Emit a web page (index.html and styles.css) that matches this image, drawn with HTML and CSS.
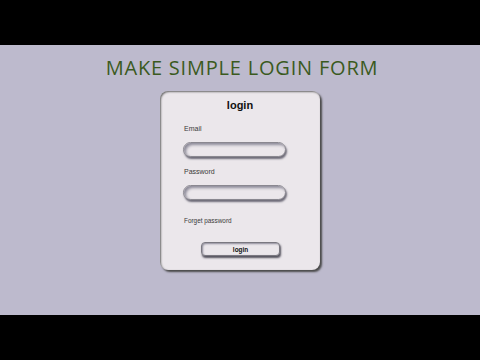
FILE: index.html
```html
<!DOCTYPE html>
<html>
<head>
<meta charset="utf-8">
<title>Make simple login form</title>
<link rel="stylesheet" href="styles.css">
</head>
<body>
<div class="bar"></div>
<main class="stage">
  <h1 class="title">MAKE SIMPLE LOGIN FORM</h1>
  <form class="card">
    <h2 class="card-title">login</h2>
    <label class="label label-email">Email</label>
    <input class="field" type="text">
    <label class="label label-pass">Password</label>
    <input class="field" type="password">
    <a class="forgot">Forget password</a>
    <button class="btn" type="button">login</button>
  </form>
</main>
<div class="bar"></div>
</body>
</html>
```
FILE: styles.css
```css
html, body {
  margin: 0;
  padding: 0;
  background: #000;
}
.bar {
  height: 45px;
  background: #000;
}
.stage {
  height: 270px;
  background: #bdbacd;
  display: flex;
  flex-direction: column;
  align-items: center;
}
.title {
  margin: 10px 0 0 4px;
  font-family: "Open Sans", sans-serif;
  font-weight: 400;
  font-size: 20px;
  line-height: 26px;
  letter-spacing: 0.8px;
  color: #3b5a1e;
}
.card {
  margin-top: 10px;
  width: 160px;
  height: 179px;
  box-sizing: border-box;
  padding: 8px 0 0 23px;
  background: #ebe7eb;
  border-radius: 8px;
  box-shadow: 2px 2px 2px #4a4a4a, inset 1px 1px 2px #6a6a6a;
  display: flex;
  flex-direction: column;
  font-family: "Liberation Sans", Arial, sans-serif;
  color: #222;
}
.card-title {
  margin: 0 0 0 -23px;
  text-align: center;
  font-size: 11px;
  line-height: 13px;
  font-weight: 700;
  color: #111;
}
.label {
  display: block;
  margin: 13px 0 0 1px;
  font-size: 7px;
  line-height: 8px;
  color: #3a3a3a;
}
.label-pass {
  margin-top: 11px;
}
.field {
  display: block;
  box-sizing: border-box;
  margin: 9px 0 0 0;
  width: 103px;
  height: 15px;
  padding: 0 8px;
  border: 1px solid #8a8890;
  border-radius: 8px;
  background: #ebe7eb;
  box-shadow: 1px 2px 2px #6d6b78, inset 2px 2px 3px #8c8a98;
  outline: none;
}
.forgot {
  display: block;
  margin: 17px 0 0 1px;
  font-size: 6.4px;
  line-height: 8px;
  color: #3a3a3a;
}
.btn {
  display: block;
  box-sizing: border-box;
  margin: 17px 0 0 18px;
  width: 79px;
  height: 14px;
  padding: 0;
  border: 1px solid #7a7880;
  border-radius: 4px;
  background: #ebe7eb;
  box-shadow: 1px 2px 2px #55535e, inset 1px 1px 2px #8c8a98;
  font-family: "Liberation Sans", Arial, sans-serif;
  font-size: 6.4px;
  font-weight: 700;
  color: #111;
}
```
